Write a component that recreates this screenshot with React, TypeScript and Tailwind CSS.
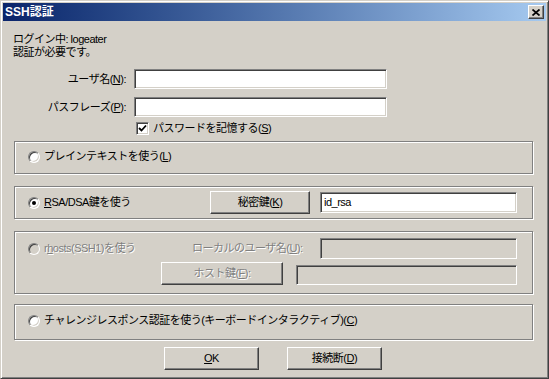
const FONT = "font-['Liberation_Sans','Noto_Sans_CJK_JP',sans-serif]";
const raised =
  "border border-t-white border-l-white border-b-[#404040] border-r-[#404040] shadow-[inset_-1px_-1px_0_#808080,inset_1px_1px_0_#d4d0c8]";
const sunken =
  "border border-t-[#808080] border-l-[#808080] border-b-white border-r-white shadow-[inset_1px_1px_0_#404040,inset_-1px_-1px_0_#d4d0c8]";
const etched = "border border-[#808080] shadow-[1px_1px_0_#fff,inset_1px_1px_0_#fff]";
const disabledText = "text-[#808080] [text-shadow:1px_1px_0_#fff]";

const U = ({ children }: { children: string }) => (
  <span className="underline underline-offset-[1px]">{children}</span>
);

const Radio = ({ checked, disabled }: { checked?: boolean; disabled?: boolean }) => (
  <span
    className={`w-[12px] h-[12px] shrink-0 rounded-full flex items-center justify-center ${
      disabled ? "bg-[#d4d0c8]" : "bg-white"
    } border border-t-[#808080] border-l-[#808080] border-b-white border-r-white shadow-[inset_1px_1px_0_#404040,inset_-1px_-1px_0_#d4d0c8]`}
  >
    {checked && <span className="w-[4px] h-[4px] rounded-full bg-black" />}
  </span>
);

const Button = ({
  className,
  children,
  disabled,
}: {
  className: string;
  children: React.ReactNode;
  disabled?: boolean;
}) => (
  <div
    className={`flex items-center justify-center bg-[#d4d0c8] ${raised} ${className} ${
      disabled ? disabledText : ""
    }`}
  >
    {children}
  </div>
);

export default function App() {
  return (
    <div
      className={`w-[549px] h-[379px] bg-[#d4d0c8] border border-t-[#d4d0c8] border-l-[#d4d0c8] border-b-[#404040] border-r-[#404040] p-[2px] shadow-[inset_1px_1px_0_#fff,inset_-1px_-1px_0_#808080] flex flex-col text-[11px] leading-[13px] tracking-[-0.5px] text-black ${FONT}`}
    >
      {/* title bar */}
      <div className="h-[18px] shrink-0 bg-linear-to-r from-[#0a246a] to-[#a6caf0] flex items-center justify-between pl-[2px] pr-[2px]">
        <span className="text-white font-bold text-[12px] leading-[14px] tracking-normal">SSH認証</span>
        <div className={`w-[16px] h-[14px] flex items-center justify-center bg-[#d4d0c8] ${raised}`}>
          <svg width="8" height="7" viewBox="0 0 8 7">
            <path d="M0.5 0.5 L7.5 6.5 M7.5 0.5 L0.5 6.5" stroke="#000" strokeWidth="1.7" />
          </svg>
        </div>
      </div>

      <div className="pl-[10px] mt-[12px]">
        <div>ログイン中: logeater</div>
        <div>認証が必要です。</div>
      </div>

      <div className="flex items-center mt-[10px]">
        <div className="w-[123px] text-right">
          ユーザ名(<U>N</U>):
        </div>
        <div className={`ml-[8px] w-[253px] h-[20px] bg-white ${sunken}`} />
      </div>
      <div className="flex items-center mt-[8px]">
        <div className="w-[123px] text-right">
          パスフレーズ(<U>P</U>):
        </div>
        <div className={`ml-[8px] w-[253px] h-[20px] bg-white ${sunken}`} />
      </div>
      <div className="flex items-center mt-[5px] ml-[133px] h-[13px]">
        <span className={`w-[13px] h-[13px] bg-white flex items-center justify-center ${sunken}`}>
          <svg width="9" height="9" viewBox="0 0 9 9">
            <path d="M1 4 L3.5 6.5 L8 1.5" stroke="#000" strokeWidth="1.8" fill="none" />
          </svg>
        </span>
        <span className="ml-[4px]">
          パスワードを記憶する(<U>S</U>)
        </span>
      </div>

      {/* plain text */}
      <div className={`ml-[11px] mr-[13px] mt-[6px] h-[33px] flex items-center pl-[13px] pb-[2px] ${etched}`}>
        <Radio />
        <span className="ml-[4px]">
          プレインテキストを使う(<U>L</U>)
        </span>
      </div>

      {/* RSA/DSA */}
      <div className={`ml-[11px] mr-[13px] mt-[12px] h-[33px] flex items-center pl-[13px] ${etched}`}>
        <div className="w-[182px] flex items-center">
          <Radio checked />
          <span className="ml-[4px]">
            <U>R</U>SA/DSA鍵を使う
          </span>
        </div>
        <Button className="w-[100px] h-[23px]">
          秘密鍵(<U>K</U>)
        </Button>
        <div className={`ml-[10px] w-[197px] h-[21px] bg-white flex items-center pl-[3px] ${sunken}`}>
          id_rsa
        </div>
      </div>

      {/* rhosts */}
      <div className={`ml-[11px] mr-[13px] mt-[12px] h-[63px] flex flex-col pt-[6px] ${etched}`}>
        <div className="flex items-center h-[21px] pl-[13px]">
          <div className="w-[164px] flex items-center">
            <Radio disabled />
            <span className={`ml-[4px] ${disabledText}`}>
              r<U>h</U>osts(SSH1)を使う
            </span>
          </div>
          <span className={`w-[128px] ${disabledText}`}>
            ローカルのユーザ名(<U>U</U>):
          </span>
          <div className={`w-[197px] h-[21px] bg-[#d4d0c8] ${sunken}`} />
        </div>
        <div className="flex items-end h-[23px] mt-[3px] pl-[146px]">
          <Button className="w-[122px] h-[23px]" disabled>
            ホスト鍵(<U>F</U>):
          </Button>
          <div className={`ml-[13px] w-[221px] h-[20px] bg-[#d4d0c8] ${sunken}`} />
        </div>
      </div>

      {/* challenge response */}
      <div className={`ml-[11px] mr-[13px] mt-[10px] h-[36px] flex items-center pl-[13px] pb-[3px] ${etched}`}>
        <Radio />
        <span className="ml-[4px]">
          チャレンジレスポンス認証を使う(キーボードインタラクティブ)(<U>C</U>)
        </span>
      </div>

      <div className="flex mt-[7px] ml-[161px]">
        <Button className="w-[95px] h-[23px]">
          <U>O</U>K
        </Button>
        <Button className="ml-[28px] w-[95px] h-[23px]">
          接続断(<U>D</U>)
        </Button>
      </div>
    </div>
  );
}
